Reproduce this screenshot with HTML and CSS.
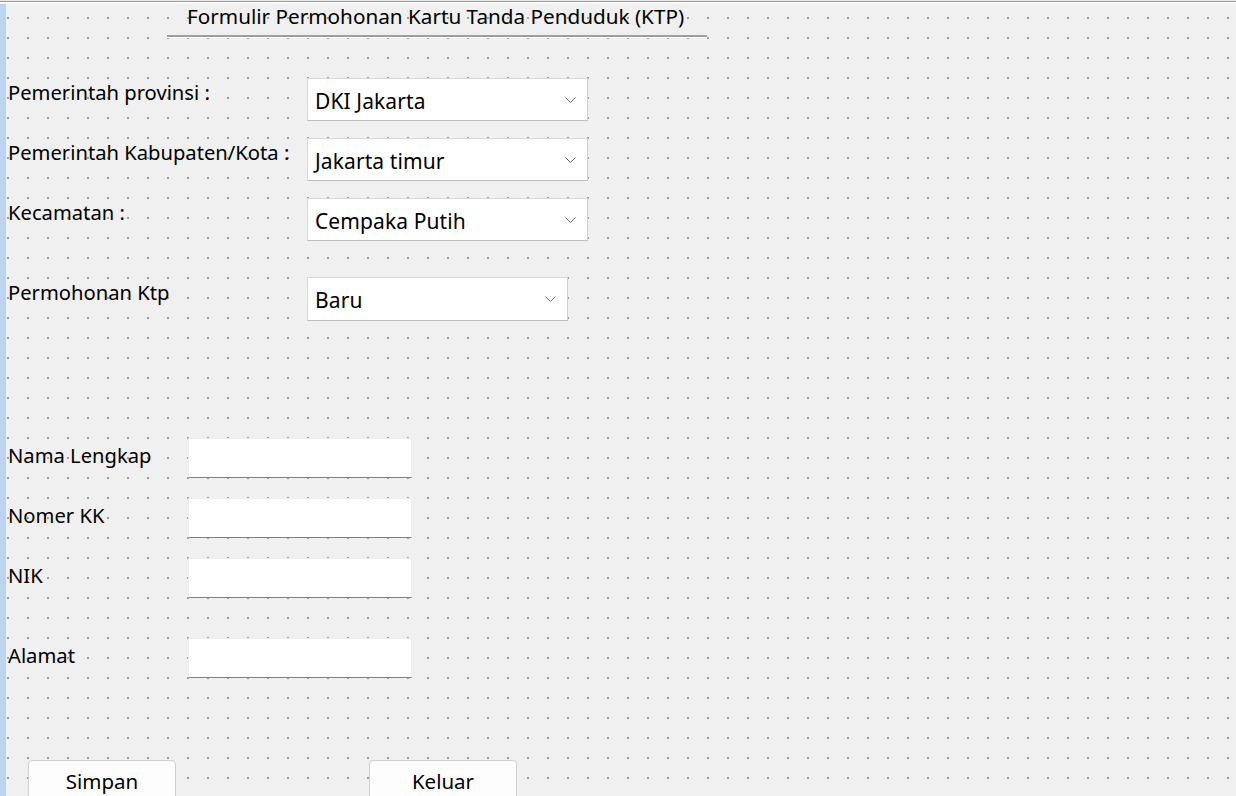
FILE: index.html
```html
<!DOCTYPE html>
<html lang="id">
<head>
<meta charset="utf-8">
<title>Formulir Permohonan KTP</title>
<link rel="stylesheet" href="styles.css">
</head>
<body>
<div class="topbar"></div>
<div class="canvas">
  <div class="title"><span class="title-text">Formulir Permohonan Kartu Tanda Penduduk (KTP)</span></div>

  <div class="row sel-row r1">
    <div class="label lbl-sel">Pemerintah provinsi :</div>
    <div class="select">
      <span class="sel-text">DKI Jakarta</span>
      <svg class="chev" width="11" height="6" viewBox="0 0 11 6"><polyline points="0.5,0.5 5.5,5.5 10.5,0.5" fill="none" stroke="#6a6a6a" stroke-width="1"/></svg>
    </div>
  </div>
  <div class="row sel-row r2">
    <div class="label lbl-sel">Pemerintah Kabupaten/Kota :</div>
    <div class="select">
      <span class="sel-text">Jakarta timur</span>
      <svg class="chev" width="11" height="6" viewBox="0 0 11 6"><polyline points="0.5,0.5 5.5,5.5 10.5,0.5" fill="none" stroke="#6a6a6a" stroke-width="1"/></svg>
    </div>
  </div>
  <div class="row sel-row r3">
    <div class="label lbl-sel">Kecamatan :</div>
    <div class="select">
      <span class="sel-text">Cempaka Putih</span>
      <svg class="chev" width="11" height="6" viewBox="0 0 11 6"><polyline points="0.5,0.5 5.5,5.5 10.5,0.5" fill="none" stroke="#6a6a6a" stroke-width="1"/></svg>
    </div>
  </div>
  <div class="row sel-row r4">
    <div class="label lbl-sel lbl-r4">Permohonan Ktp</div>
    <div class="select select-short">
      <span class="sel-text">Baru</span>
      <svg class="chev" width="11" height="6" viewBox="0 0 11 6"><polyline points="0.5,0.5 5.5,5.5 10.5,0.5" fill="none" stroke="#6a6a6a" stroke-width="1"/></svg>
    </div>
  </div>

  <div class="row txt-row t1">
    <div class="label lbl-txt">Nama Lengkap</div>
    <div class="textbox"></div>
  </div>
  <div class="row txt-row t2">
    <div class="label lbl-txt">Nomer KK</div>
    <div class="textbox"></div>
  </div>
  <div class="row txt-row t3">
    <div class="label lbl-txt">NIK</div>
    <div class="textbox"></div>
  </div>
  <div class="row txt-row t4">
    <div class="label lbl-txt">Alamat</div>
    <div class="textbox"></div>
  </div>

  <div class="buttons">
    <div class="btn">Simpan</div>
    <div class="btn">Keluar</div>
  </div>
</div>
</body>
</html>
```
FILE: styles.css
```css
* { box-sizing: border-box; }
html, body {
  margin: 0;
  padding: 0;
  width: 1236px;
  height: 796px;
  overflow: hidden;
  background: #f0f0f0;
  font-family: "Noto Sans", "Open Sans", sans-serif;
  color: #000;
}
.topbar {
  height: 4px;
  background: linear-gradient(to bottom, #e6e6e6 0 1px, #a0a0a0 1px 2px, #fafafa 2px 4px);
}
.canvas {
  height: 792px;
  border-left: 6px solid #bcd4ee;
  padding-left: 2px;
  display: flex;
  flex-direction: column;
  background-color: #f0f0f0;
  background-image: conic-gradient(at 2px 2px, transparent 0 75%, #a0a0a0 75% 100%);
  background-size: 20px 20px;
  background-position: 1px 13px;
  background-origin: padding-box;
}
.canvas > * { flex: none; }
.title {
  margin-top: -2px;
  margin-left: 159px;
  width: 540px;
  height: 35px;
  padding-left: 20px;
  border-bottom: 2px solid #a0a0a0;
  box-shadow: 0 1px 0 #ffffff;
  font-size: 20.7px;
  line-height: 28px;
  white-space: nowrap;
}
.row {
  display: flex;
  align-items: flex-start;
}
.label {
  font-size: 20.2px;
  line-height: 26px;
  white-space: nowrap;
}
.lbl-sel { width: 299px; margin-top: 1px; }
.lbl-r4 { margin-top: 2px; }
.lbl-txt { width: 180px; margin-top: 4px; }
.r1 { margin-top: 41px; }
.r2, .r3 { margin-top: 17px; }
.r4 { margin-top: 36px; }
.select {
  width: 281px;
  height: 43px;
  background: #ffffff;
  border: 1px solid #d9d9d9;
  border-bottom-color: #bdbdbd;
  border-right-color: #cfcfcf;
  display: flex;
  align-items: center;
  padding-left: 7px;
}
.select-short { width: 261px; height: 44px; }
.sel-text {
  align-self: flex-start;
  margin-top: 8px;
  font-size: 21px;
  letter-spacing: 0.1px;
  line-height: 28px;
  white-space: nowrap;
}
.chev {
  margin-left: auto;
  margin-right: 11px;
  flex: none;
}
.t1 { margin-top: 117px; }
.t2, .t3 { margin-top: 20px; }
.t4 { margin-top: 40px; }
.textbox {
  width: 224px;
  height: 40px;
  background: #ffffff;
  border: 1px solid #ececec;
  border-bottom: 1px solid #7f7f7f;
}
.buttons {
  margin-top: 82px;
  margin-left: 20px;
  display: flex;
  gap: 193px;
}
.btn {
  width: 148px;
  height: 40px;
  background: #fdfdfd;
  border: 1px solid #d0d0d0;
  border-radius: 4px;
  font-size: 20.5px;
  line-height: 26px;
  padding-top: 7px;
  text-align: center;
}
```
